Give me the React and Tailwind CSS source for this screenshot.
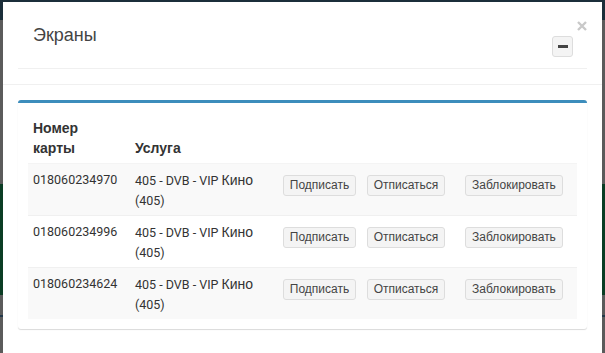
import React from "react";

const rows = ["018060234970", "018060234996", "018060234624"];

function Btn({ children, w }) {
  return (
    <button
      className={`${w} h-[21px] bg-[#f4f4f4] border border-[#dddddd] rounded-[3px] text-[12px] leading-[19px] text-[#444] text-center font-['Liberation_Sans',Arial,sans-serif]`}
    >
      {children}
    </button>
  );
}

export default function App() {
  return (
    <div className="relative w-[605px] h-[353px] overflow-hidden bg-[#5b5b5b]">
      <div className="flex flex-col">
        <div className="h-[20px] bg-[#1b2e3a]" />
        <div className="h-[164px] bg-[#5b5b5b]" />
        <div className="h-[111px] bg-[#0b3d24]" />
        <div className="h-[20px] bg-[#5b5b5b]" />
        <div className="h-[2px] bg-[#23384a]" />
        <div className="h-[36px] bg-[#5b5b5b]" />
      </div>

      <div className="absolute left-[3px] top-[2px] w-[599px] bottom-0 bg-white">
        {/* close */}
        <div className="absolute right-[15px] top-[19px] w-[10px] h-[10px]">
          <svg width="10" height="10" viewBox="0 0 10 10">
            <path d="M1 1 L9 9 M9 1 L1 9" stroke="#c9c9c9" strokeWidth="2.4" strokeLinecap="butt" />
          </svg>
        </div>

        {/* modal header */}
        <div className="pt-[15px] pb-[15px] px-[15px] border-b border-[#f0f0f0]">
          <div className="h-[52px] border-b border-[#f0f0f0] flex justify-between">
            <div className="pl-[15px] pt-[8px] text-[18px] leading-[20px] text-[#444] font-['Liberation_Sans',Arial,sans-serif]">
              Экраны
            </div>
            <div className="pr-[14px] pt-[19px]">
              <div className="w-[21px] h-[21px] bg-[#f4f4f4] border border-[#dddddd] rounded-[3px] flex items-center justify-center">
                <div className="w-[10px] h-[3px] bg-[#444]" />
              </div>
            </div>
          </div>
        </div>

        {/* modal body */}
        <div className="p-[15px]">
          <div className="border-t-[3px] border-[#3c8dbc] rounded-[3px] shadow-[0_1px_1px_rgba(0,0,0,0.15)] bg-white p-[10px]">
            <table className="w-full table-fixed border-collapse text-[#333]">
              <colgroup>
                <col className="w-[102px]" />
                <col className="w-[148px]" />
                <col className="w-[84px]" />
                <col className="w-[98px]" />
                <col />
              </colgroup>
              <thead>
                <tr className="border-b border-[#f4f4f4]">
                  <th className="p-[5px] text-left align-bottom text-[14px] leading-[20px] font-bold font-['Liberation_Sans',Arial,sans-serif]">
                    Номер
                    <br />
                    карты
                  </th>
                  <th className="p-[5px] text-left align-bottom text-[14px] leading-[20px] font-bold font-['Liberation_Sans',Arial,sans-serif]">
                    Услуга
                  </th>
                  <th className="p-[5px]" />
                  <th className="p-[5px]" />
                  <th className="p-[5px]" />
                </tr>
              </thead>
              <tbody>
                {rows.map((n, i) => (
                  <tr
                    key={n}
                    className={`border-t border-[#f0f0f0] ${i % 2 === 0 ? "bg-[#f9f9f9]" : "bg-white"}`}
                  >
                    <td className="px-[5px] pt-[6px] pb-[4px] align-top text-[12.5px] leading-[20px] font-['Roboto',sans-serif]">
                      {n}
                    </td>
                    <td className="px-[5px] pt-[6px] pb-[4px] align-top text-[12.5px] leading-[20px] font-['Roboto',sans-serif]">
                      <span>405 - DVB - VIP </span>
                      <span className="text-[14px] font-['Liberation_Sans',Arial,sans-serif]">Кино</span>
                      <span> (405)</span>
                    </td>
                    <td className="px-[5px] pt-[7px] pb-[4px] align-top">
                      <Btn w="w-[73px]">Подписать</Btn>
                    </td>
                    <td className="px-[5px] pt-[7px] pb-[4px] align-top">
                      <Btn w="w-[78px]">Отписаться</Btn>
                    </td>
                    <td className="px-[5px] pt-[7px] pb-[4px] align-top">
                      <Btn w="w-[98px]">Заблокировать</Btn>
                    </td>
                  </tr>
                ))}
              </tbody>
            </table>
          </div>
        </div>
      </div>
    </div>
  );
}
